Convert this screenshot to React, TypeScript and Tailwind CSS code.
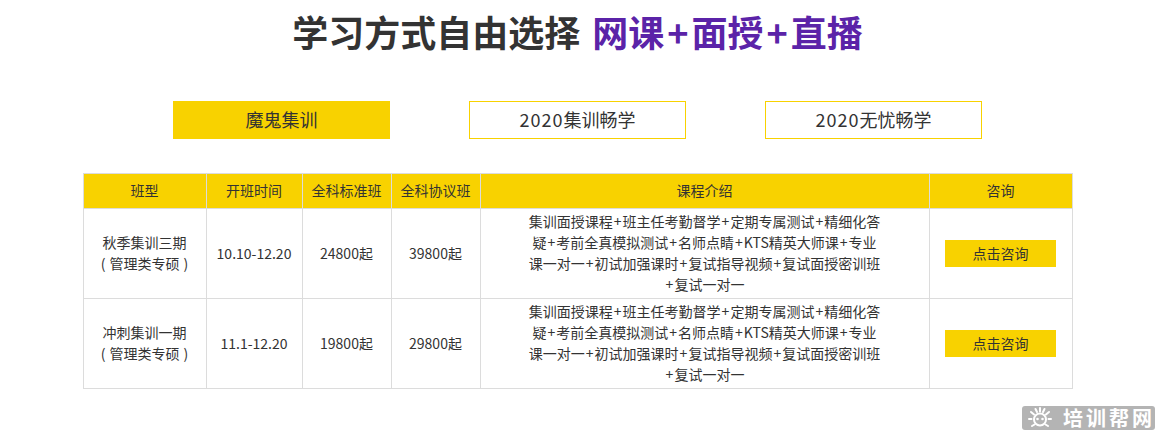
const fontStack = "font-['Microsoft_YaHei','Noto_Sans_CJK_SC',sans-serif]";

const introLines = [
	'集训面授课程+班主任考勤督学+定期专属测试+精细化答',
	'疑+考前全真模拟测试+名师点睛+KTS精英大师课+专业',
	'课一对一+初试加强课时+复试指导视频+复试面授密训班',
	'+复试一对一',
];

const rows = [
	{ name: '秋季集训三期', time: '10.10-12.20', standard: '24800起', agreement: '39800起' },
	{ name: '冲刺集训一期', time: '11.1-12.20', standard: '19800起', agreement: '29800起' },
];

// the plus signs are wider in the reference than in our CJK font
function Pluses({ text, className }: { text: string; className: string }) {
	return (
		<>
			{text.split('+').map((part, i) => (
				<span key={i}>
					{i > 0 && <span className={className}>+</span>}
					{part}
				</span>
			))}
		</>
	);
}

function Tab({ label, year, active }: { label: string; year?: string; active?: boolean }) {
	return (
		<div
			className={`flex h-[38px] w-[217px] items-center justify-center border border-[#f8d200] pb-[2px] text-[18px] ${
				active ? 'bg-[#f8d200]' : 'bg-white'
			}`}
		>
			{year && <span className="tracking-[1px]">{year}</span>}
			{label}
		</div>
	);
}

function Watermark() {
	return (
		<div className="absolute left-[1022px] top-[406px] flex h-[24px] w-[133px] items-center rounded-[3px] bg-[#b4b4b4] pl-[5px]">
			<svg width="26" height="24" viewBox="0 0 26 24" fill="none" stroke="#fff" strokeWidth="2" strokeLinecap="round">
				<circle cx="13" cy="13.5" r="6" />
				<circle cx="10.5" cy="13" r="1.3" fill="#fff" stroke="none" />
				<circle cx="15.5" cy="13" r="1.3" fill="#fff" stroke="none" />
				<path d="M13 2v3.5M8.5 3l1.5 3M17.5 3L16 6M4 6l3 2.5M22 6l-3 2.5M2 13h2.5M21.5 13H24M5 20l2.5-1.5M21 20l-2.5-1.5" />
			</svg>
			<span className="ml-[10px] text-[20px] font-bold leading-[24px] tracking-[3px] whitespace-nowrap text-white">培训帮网</span>
		</div>
	);
}

export default function App() {
	return (
		<div className={`relative h-[436px] w-[1160px] overflow-hidden bg-white text-[#333] ${fontStack}`}>
			<div className="flex w-[1155px] flex-col items-center">
				<h1 className="mt-[5px] h-[55px] text-[36px] font-bold leading-[52px] whitespace-nowrap text-[#333]">
					学习方式自由选择<span className="ml-[12px] text-[#5b23a8]"><Pluses text="网课+面授+直播" className="mx-[3px]" /></span>
				</h1>
				<div className="mt-[41px] flex gap-[79px]">
					<Tab label="魔鬼集训" active />
					<Tab label="集训畅学" year="2020" />
					<Tab label="无忧畅学" year="2020" />
				</div>
				<table className="mt-[34px] w-[989px] table-fixed border-collapse text-center text-[14px] leading-[21px]">
					<colgroup>
						<col className="w-[123px]" />
						<col className="w-[96px]" />
						<col className="w-[89px]" />
						<col className="w-[89px]" />
						<col className="w-[449px]" />
						<col className="w-[143px]" />
					</colgroup>
					<thead>
						<tr className="h-[35px] bg-[#f8d200]">
							{['班型', '开班时间', '全科标准班', '全科协议班', '课程介绍', '咨询'].map((title) => (
								<th key={title} className="border border-[#dcdcdc] pb-[2px] font-normal">
									{title}
								</th>
							))}
						</tr>
					</thead>
					<tbody>
						{rows.map((row) => (
							<tr key={row.name} className="h-[90px]">
								<td className="border border-[#dcdcdc] pb-px">
									{row.name}
									<br />(<span className="px-[4px]">管理类专硕</span>)
								</td>
								<td className="border border-[#dcdcdc]">{row.time}</td>
								<td className="border border-[#dcdcdc]">{row.standard}</td>
								<td className="border border-[#dcdcdc]">{row.agreement}</td>
								<td className="border border-[#dcdcdc] pb-px">
									{introLines.map((line) => (
										<div key={line} className="whitespace-nowrap">
											<Pluses text={line} className="mx-px" />
										</div>
									))}
								</td>
								<td className="border border-[#dcdcdc]">
									<div className="mx-auto flex h-[27px] w-[111px] items-center justify-center bg-[#f8d200] pb-px">
										点击咨询
									</div>
								</td>
							</tr>
						))}
					</tbody>
				</table>
			</div>
			<Watermark />
		</div>
	);
}
